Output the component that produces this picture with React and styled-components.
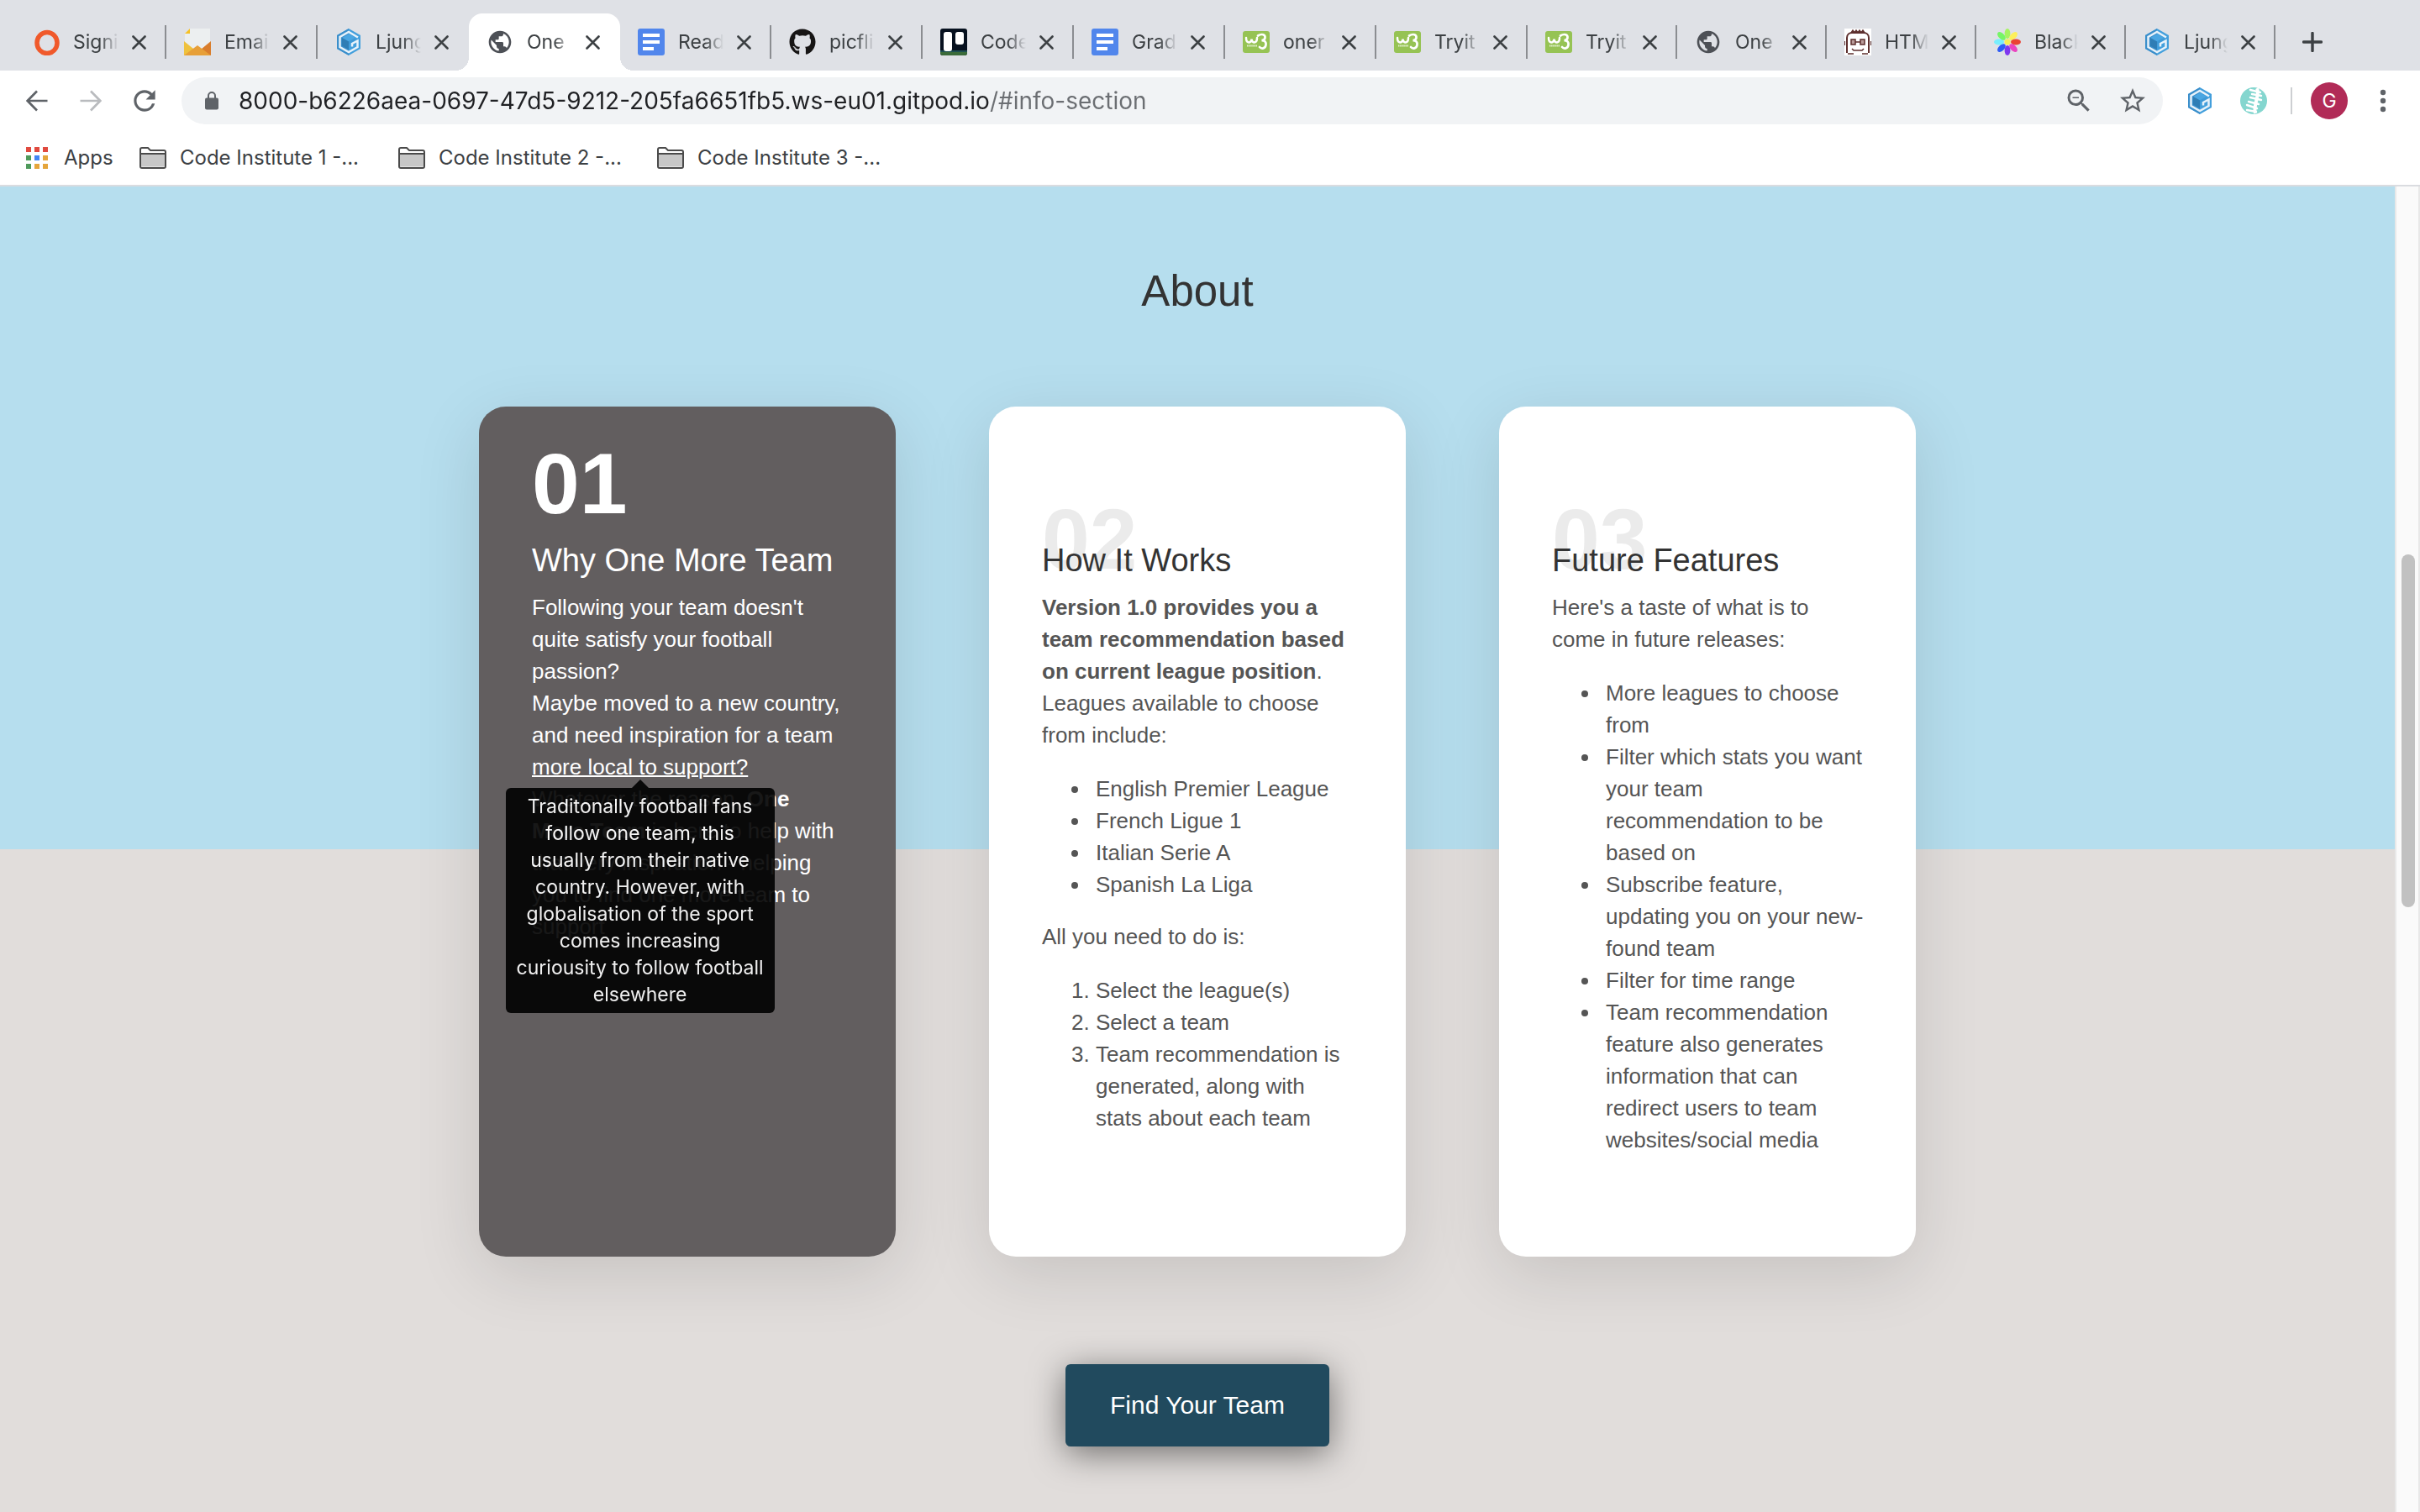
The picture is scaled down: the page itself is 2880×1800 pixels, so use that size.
import React from "react";
import styled, { createGlobalStyle, css } from "styled-components";
import { MdPublic, MdRefresh, MdStarOutline, MdZoomOut } from "react-icons/md";
import { FaGithub } from "react-icons/fa";

const uiFont = `Inter, Roboto, sans-serif`;
const pageFont = `"Liberation Sans", Arial, sans-serif`;

const GlobalStyle = createGlobalStyle`
  *, *::before, *::after { box-sizing: border-box; }
  body { margin: 0; background: #fff; }
  button { border: 0; padding: 0; background: none; font: inherit; color: inherit; cursor: pointer; }
`;

const Window = styled.div`
  display: flex;
  flex-direction: column;
  min-height: 100vh;
`;

/* ---------- browser chrome ---------- */

const Chrome = styled.header`
  font-family: ${uiFont};
  color: #3c4043;
  background: #fff;
  border-bottom: 2px solid #dadce0;
`;

const TabStrip = styled.div`
  display: flex;
  align-items: flex-end;
  height: 84px;
  padding-left: 18px;
  background: #dfe1e6;
`;

const activeTab = css`
  background: #fff;
  border-radius: 16px 16px 0 0;

  &::before,
  &::after {
    content: "";
    position: absolute;
    bottom: 0;
    width: 16px;
    height: 16px;
  }
  &::before {
    right: 100%;
    background: radial-gradient(circle at 0 0, transparent 16px, #fff 16px);
  }
  &::after {
    left: 100%;
    background: radial-gradient(circle at 100% 0, transparent 16px, #fff 16px);
  }
`;

const Tab = styled.div`
  position: relative;
  display: flex;
  align-items: center;
  flex: 0 1 ${(p) => (p.$narrow ? 178 : 180)}px;
  min-width: 0;
  height: 68px;
  padding-left: 21px;
  ${(p) => p.$active && activeTab}
`;

const TabButton = styled.button`
  display: flex;
  flex: 1;
  align-items: center;
  gap: 16px;
  min-width: 0;
  height: 100%;

  svg {
    flex: none;
    width: 32px;
    height: 32px;
  }
`;

const TabLabel = styled.span`
  flex: 1;
  min-width: 0;
  overflow: hidden;
  white-space: nowrap;
  text-align: left;
  font-size: 23px;
  line-height: 32px;
  mask-image: linear-gradient(to right, #000 60%, transparent 100%);
`;

const CloseButton = styled.button`
  display: flex;
  flex: none;
  margin: 0 22px 0 16px;

  svg {
    width: 17px;
    height: 17px;
  }
`;

const TabDivider = styled.span`
  flex: none;
  width: 2px;
  height: 40px;
  background: ${(p) => (p.$hidden ? "transparent" : "#8b8d91")};
`;

const NewTabButton = styled.button`
  display: flex;
  align-items: center;
  justify-content: center;
  width: 88px;
  height: 68px;

  svg {
    width: 24px;
    height: 24px;
  }
`;

const Toolbar = styled.div`
  display: flex;
  align-items: center;
  height: 72px;
  padding: 0 12px;
`;

const IconButton = styled.button`
  display: flex;
  flex: none;
  align-items: center;
  justify-content: center;
  width: 64px;
  height: 56px;
  color: ${(p) => (p.$muted ? "#b9bbbe" : "#5f6368")};

  svg {
    width: ${(p) => p.$size || 32}px;
    height: ${(p) => p.$size || 32}px;
  }
`;

const AddressBar = styled.form`
  display: flex;
  flex: 1;
  align-items: center;
  height: 56px;
  margin: 0 12px;
  padding: 0 4px 0 28px;
  border-radius: 28px;
  background: #f1f3f5;

  > svg {
    flex: none;
    width: 16px;
    height: 22px;
    margin-right: 24px;
  }
`;

const AddressInput = styled.input`
  flex: 1;
  min-width: 0;
  height: 40px;
  padding: 0;
  border: 0;
  outline: 0;
  font-family: ${uiFont};
  font-size: 28px;
  color: transparent;
  caret-color: #202124;
  background: linear-gradient(to right, #202124 894px, #6b6e72 894px);
  background-clip: text;
`;

const ToolbarDivider = styled.span`
  flex: none;
  width: 2px;
  height: 32px;
  margin: 0 12px;
  background: #cdcfd2;
`;

const Avatar = styled.span`
  display: flex;
  align-items: center;
  justify-content: center;
  width: 44px;
  height: 44px;
  border-radius: 50%;
  background: #b12b57;
  color: #fff;
  font-size: 23px;
`;

const BookmarkBar = styled.nav`
  display: flex;
  align-items: center;
  height: 64px;
  padding-left: 31px;
`;

const Bookmark = styled.a`
  display: flex;
  align-items: center;
  gap: ${(p) => (p.$apps ? 19 : 16)}px;
  width: ${(p) => (p.$apps ? 135 : 308)}px;
  color: inherit;
  font-size: 24px;
  line-height: 32px;
  white-space: nowrap;
  text-decoration: none;
`;

/* ---------- web page ---------- */

const Viewport = styled.div`
  display: flex;
  flex: 1;
`;

const Page = styled.main`
  display: flex;
  flex: 1;
  flex-direction: column;
  align-items: center;
  padding: 94px 0 78px;
  font-family: ${pageFont};
  background: linear-gradient(to bottom, #b6deee 50%, #e1dddb 50%);
`;

const ScrollTrack = styled.div`
  display: grid;
  grid-template-rows: 438fr 420fr 720fr;
  width: 30px;
  padding: 0 4px 0 6px;
  border: solid #e8e8e8;
  border-width: 0 2px;
  background: #fafafa;
`;

const ScrollThumb = styled.div`
  grid-row: 2;
  width: 16px;
  border-radius: 8px;
  background: #c1c1c1;
`;

const PageTitle = styled.h2`
  margin: 0 0 106px;
  font-size: 51px;
  line-height: 62px;
  font-weight: 400;
  color: #333;
`;

const Cards = styled.section`
  display: grid;
  grid-template-columns: repeat(3, 1fr);
  gap: 111px;
  width: 60%;
`;

const Card = styled.article`
  padding: 42px 60px 96px 63px;
  border-radius: 32px;
  background: ${(p) => (p.$dark ? "#625e5f" : "#fff")};
  color: ${(p) => (p.$dark ? "#fff" : "#555")};
  box-shadow: 0 20px 80px rgba(0, 0, 0, 0.12);
  font-size: 26px;
  line-height: 38px;
`;

const CardHead = styled.div`
  display: grid;
  height: 166px;
  margin-bottom: 12px;
`;

const CardNumber = styled.span`
  grid-area: 1 / 1;
  align-self: ${(p) => (p.$raised ? "start" : "end")};
  font-size: 102px;
  line-height: 100px;
  font-weight: 700;
  color: ${(p) => (p.$raised ? "#fff" : "#ebebeb")};
`;

const CardTitle = styled.h3`
  grid-area: 1 / 1;
  align-self: end;
  margin: 0;
  font-size: 38px;
  line-height: 50px;
  font-weight: 400;
  white-space: nowrap;
  color: ${(p) => (p.$dark ? "#fff" : "#333")};
`;

const Paragraph = styled.p`
  margin: 0 0 26px;
`;

const BulletList = styled.ul`
  margin: 0 0 24px;
  padding-left: 58px;

  li {
    padding-left: 6px;
  }
`;

const StepList = styled.ol`
  margin: 0 0 24px;
  padding-left: 64px;
`;

const TooltipTarget = styled.span`
  position: relative;
  text-decoration: underline;
  text-decoration-thickness: 2px;
`;

const Tooltip = styled.span`
  position: absolute;
  top: calc(100% + 10px);
  left: 50%;
  width: 320px;
  padding: 6px 12px;
  transform: translateX(-50%);
  border-radius: 6px;
  background: #000;
  color: #fff;
  opacity: 0.9;
  font-family: ${uiFont};
  font-size: 23px;
  line-height: 32px;
  text-align: center;

  &::before {
    content: "";
    position: absolute;
    bottom: 100%;
    left: 50%;
    transform: translateX(-50%);
    border: 10px solid transparent;
    border-top: 0;
    border-bottom-color: #000;
  }
`;

const FindButton = styled.button`
  && {
    margin-top: 128px;
    padding: 24px 53px;
    border-radius: 6px;
    background: #214a5e;
    color: #fff;
    font-size: 30px;
    line-height: 50px;
    box-shadow: 0 8px 40px rgba(0, 0, 0, 0.5);
  }
`;

/* ---------- icons ---------- */

const RingIcon = () => (
  <svg viewBox="0 0 32 32">
    <ellipse cx="17" cy="17" rx="12" ry="12.5" fill="none" stroke="#f0592b" strokeWidth="5.5" />
  </svg>
);

const MailIcon = () => (
  <svg viewBox="0 0 32 32">
    <path d="M7 0h24v24H1V6z" fill="#eceff0" />
    <path d="M7 0v6H1z" fill="#f5c026" />
    <path d="M0 15l16 13L0 32z" fill="#efc13d" />
    <path d="M32 15L15 29l17 3z" fill="#d97d2c" />
    <path d="M0 32l16-12 16 12z" fill="#e79f38" />
  </svg>
);

const HexIcon = () => (
  <svg viewBox="0 0 32 32">
    <path d="M16 0l14 8v16l-14 8L2 24V8z" fill="#439fdc" />
    <path d="M16 0L2 8v16l14 8z" fill="#3b8fcb" />
    <path d="M27 10.500L16 4 5.500 10v12L16 28l10.500-6v-7.500L20 18v3.500" fill="none" stroke="#e8f2fa" strokeWidth="2.500" />
    <path d="M16 6.500L8 11l8 4.500 8-4.500z" fill="#4aa6e2" />
    <path d="M8 11v9.500l8 4.500v-9.500z" fill="#2f7db5" />
    <path d="M16 15.500l8-4.500v2.500l-8 5z" fill="#3f99d6" />
  </svg>
);

const GlobeIcon = () => <MdPublic color="#4d5056" />;

const DocIcon = () => (
  <svg viewBox="0 0 32 32">
    <rect width="32" height="32" rx="3" fill="#5186ec" />
    <path d="M6 8h20M6 16h20M6 24h13" stroke="#fff" strokeWidth="4" />
  </svg>
);

const GithubIcon = () => <FaGithub color="#171515" />;

const BoardIcon = () => (
  <svg viewBox="0 0 32 32">
    <rect width="32" height="32" rx="3" fill="#07111f" />
    <path d="M0 26h32v3a3 3 0 0 1-3 3H3a3 3 0 0 1-3-3z" fill="#3b6b3a" />
    <path d="M0 26h32v2H0z" fill="#1d4f52" />
    <rect x="4" y="4" width="10" height="23" rx="3" fill="#fff" />
    <rect x="18" y="4" width="10" height="15" rx="3" fill="#fff" />
  </svg>
);

const SchoolIcon = () => (
  <svg viewBox="0 0 32 32">
    <rect y="3" width="32" height="26" rx="3" fill="#96c354" />
    <path d="M4 11c0 7 6 7 6.500 1.500C11 18 17 18 17 11" fill="none" stroke="#fff" strokeWidth="2.500" strokeLinecap="round" />
    <path d="M18 8.500c5-3 9-1 8.500 2.500-.3 2-2 3-4 3.200 4 0 5.500 2.300 5 5.300-.6 4-5 5.500-7.500 2.500" fill="none" stroke="#fff" strokeWidth="2.700" strokeLinecap="round" />
    <path d="M5 20.500h12" stroke="#e4f0d2" strokeWidth="2" strokeDasharray="1.500 .6" />
  </svg>
);

const FaceIcon = () => (
  <svg viewBox="0 0 32 32" fill="none" stroke="#5d2f2e" strokeWidth="2">
    <rect width="32" height="32" fill="#fff" stroke="none" />
    <path d="M3 29V11c0-4 3-6 6-6h14c3 0 6 2 6 6v18" />
    <path d="M8 5l2-3 2 3 2-3 2 3 2-3 2 3 2-3 2 3" strokeWidth="1.500" />
    <path d="M0 15v5M32 15v5" />
    <rect x="8" y="13" width="5" height="6" fill="#b99c9a" strokeWidth="1.500" />
    <rect x="19" y="13" width="5" height="6" fill="#b99c9a" strokeWidth="1.500" />
    <path d="M13 16h6M9 24l2 2h10l2-2M4 30h7M21 30h7" strokeWidth="1.500" />
  </svg>
);

const petals = ["#a6f45f", "#fdf05a", "#ea4334", "#ea45c0", "#8037ef", "#2f5df5", "#78eefd", "#76f566"];
const FlowerIcon = () => (
  <svg viewBox="0 0 32 32">
    {petals.map((fill, i) => (
      <ellipse key={fill} cx="16" cy="6" rx="3.400" ry="6" fill={fill} transform={`rotate(${i * 45} 16 16)`} />
    ))}
    <circle cx="16" cy="16" r="3.500" fill="#f8ef52" />
  </svg>
);

const CloseIcon = () => (
  <svg viewBox="0 0 17 17">
    <path d="M1.500 1.500l14 14M15.500 1.500l-14 14" stroke="currentColor" strokeWidth="2.600" strokeLinecap="round" />
  </svg>
);

const PlusIcon = () => (
  <svg viewBox="0 0 24 24">
    <path d="M12 1.500v21M1.500 12h21" stroke="currentColor" strokeWidth="3.400" strokeLinecap="round" />
  </svg>
);

const ArrowIcon = ({ flip }) => (
  <svg viewBox="0 0 26 26">
    <path
      d="M25.500 13H2M13 1.500L1.700 13 13 24.500"
      fill="none"
      stroke="currentColor"
      strokeWidth="2.700"
      transform={flip ? "rotate(180 13 13)" : undefined}
    />
  </svg>
);

const LockIcon = () => (
  <svg viewBox="0 0 16 22">
    <rect y="7.500" width="16" height="14" rx="2" fill="#5f6368" />
    <path d="M4 9V5a4 4 0 0 1 8 0v4" fill="none" stroke="#5f6368" strokeWidth="2" />
  </svg>
);

const SpineIcon = () => (
  <svg viewBox="0 0 32 32">
    <circle cx="16" cy="16" r="16" fill="#84d6cf" />
    <path d="M20 1c4 8-5 20-2 30" fill="none" stroke="#fff" strokeWidth="4" />
    <path d="M12 3l12 3M14 8l11 2M12 12l13 3M10 17l12 3M8 21l12 4M8 27l11 2" stroke="#fff" strokeWidth="2.400" strokeLinecap="round" />
  </svg>
);

const DotsIcon = () => (
  <svg viewBox="0 0 28 28" fill="currentColor">
    <circle cx="14" cy="4" r="3.200" />
    <circle cx="14" cy="14" r="3.200" />
    <circle cx="14" cy="24" r="3.200" />
  </svg>
);

const appColors = ["#e04a3f", "#e04a3f", "#e04a3f", "#4f9a5b", "#4285f4", "#e5a53b", "#4f9a5b", "#e5a53b", "#e5a53b"];
const AppsIcon = () => (
  <svg width="26" height="26" viewBox="0 0 26 26">
    {appColors.map((fill, i) => (
      <rect key={i} x={(i % 3) * 10} y={Math.floor(i / 3) * 10} width="6" height="6" fill={fill} />
    ))}
  </svg>
);

const FolderIcon = () => (
  <svg width="32" height="26" viewBox="0 0 32 26">
    <path d="M1 3a2 2 0 0 1 2-2h7l3 3h16a2 2 0 0 1 2 2v17a2 2 0 0 1-2 2H3a2 2 0 0 1-2-2z" fill="#fff" stroke="#4a4a4a" strokeWidth="2" />
    <path d="M2 8h28v15.500H2z" fill="#c7c7c7" />
    <path d="M1 8h30" stroke="#4a4a4a" strokeWidth="2" />
  </svg>
);

/* ---------- data ---------- */

const tabs = [
  { label: "Signi", Icon: RingIcon },
  { label: "Emai", Icon: MailIcon },
  { label: "Ljung", Icon: HexIcon },
  { label: "One", Icon: GlobeIcon, active: true },
  { label: "Read", Icon: DocIcon },
  { label: "picfli", Icon: GithubIcon },
  { label: "Code", Icon: BoardIcon },
  { label: "Grad", Icon: DocIcon },
  { label: "oner", Icon: SchoolIcon },
  { label: "Tryit", Icon: SchoolIcon },
  { label: "Tryit", Icon: SchoolIcon, narrow: true },
  { label: "One", Icon: GlobeIcon, narrow: true },
  { label: "HTM", Icon: FaceIcon, narrow: true },
  { label: "Black", Icon: FlowerIcon, narrow: true },
  { label: "Ljung", Icon: HexIcon, narrow: true },
];

const folders = ["Code Institute 1 -...", "Code Institute 2 -...", "Code Institute 3 -..."];

const leagues = ["English Premier League", "French Ligue 1", "Italian Serie A", "Spanish La Liga"];

const steps = [
  "Select the league(s)",
  "Select a team",
  "Team recommendation is generated, along with stats about each team",
];

const features = [
  "More leagues to choose from",
  "Filter which stats you want your team recommendation to be based on",
  "Subscribe feature, updating you on your new-found team",
  "Filter for time range",
  "Team recommendation feature also generates information that can redirect users to team websites/social media",
];

/* ---------- composition ---------- */

function BrowserTabs() {
  return (
    <TabStrip>
      {tabs.map(({ label, Icon, active, narrow }, i) => (
        <Tab key={i} $active={active} $narrow={narrow}>
          <TabButton>
            <Icon />
            <TabLabel>{label}</TabLabel>
          </TabButton>
          <CloseButton aria-label="Close tab">
            <CloseIcon />
          </CloseButton>
          <TabDivider $hidden={active || (tabs[i + 1] && tabs[i + 1].active)} />
        </Tab>
      ))}
      <NewTabButton aria-label="New tab">
        <PlusIcon />
      </NewTabButton>
    </TabStrip>
  );
}

function BrowserToolbar() {
  return (
    <Toolbar>
      <IconButton $size={26} aria-label="Back">
        <ArrowIcon />
      </IconButton>
      <IconButton $size={26} $muted aria-label="Forward">
        <ArrowIcon flip />
      </IconButton>
      <IconButton $size={38} aria-label="Reload">
        <MdRefresh />
      </IconButton>
      <AddressBar onSubmit={(e) => e.preventDefault()}>
        <LockIcon />
        <AddressInput
          type="text"
          aria-label="Address"
          defaultValue="8000-b6226aea-0697-47d5-9212-205fa6651fb5.ws-eu01.gitpod.io/#info-section"
        />
        <IconButton type="button" $size={36} aria-label="Zoom">
          <MdZoomOut />
        </IconButton>
        <IconButton type="button" $size={36} aria-label="Bookmark this page">
          <MdStarOutline />
        </IconButton>
      </AddressBar>
      <IconButton aria-label="Gitpod extension">
        <HexIcon />
      </IconButton>
      <IconButton aria-label="Extension">
        <SpineIcon />
      </IconButton>
      <ToolbarDivider />
      <IconButton aria-label="Profile">
        <Avatar>G</Avatar>
      </IconButton>
      <IconButton $size={28} aria-label="Menu">
        <DotsIcon />
      </IconButton>
    </Toolbar>
  );
}

function InfoCard({ number, title, dark, children }) {
  return (
    <Card $dark={dark}>
      <CardHead>
        <CardNumber $raised={dark}>{number}</CardNumber>
        <CardTitle $dark={dark}>{title}</CardTitle>
      </CardHead>
      {children}
    </Card>
  );
}

export default function App() {
  return (
    <Window>
      <GlobalStyle />
      <Chrome>
        <BrowserTabs />
        <BrowserToolbar />
        <BookmarkBar>
          <Bookmark href="#apps" $apps>
            <AppsIcon />
            Apps
          </Bookmark>
          {folders.map((name) => (
            <Bookmark key={name} href="#folder">
              <FolderIcon />
              {name}
            </Bookmark>
          ))}
        </BookmarkBar>
      </Chrome>

      <Viewport>
        <Page>
          <PageTitle>About</PageTitle>
          <Cards>
            <InfoCard number="01" title="Why One More Team" dark>
              <Paragraph>
                Following your team doesn't quite satisfy your football passion?
                <br />
                Maybe moved to a new country, and need inspiration for a team{" "}
                <TooltipTarget tabIndex={0} aria-describedby="local-tip">
                  more local to support?
                  <Tooltip id="local-tip" role="tooltip">
                    Traditonally football fans follow one team, this usually from their native
                    country. However, with globalisation of the sport comes increasing curiousity
                    to follow football elsewhere
                  </Tooltip>
                </TooltipTarget>
                <br />
                Whatever the reason, <strong>One More Team</strong> is here to help with that very
                inspiration - helping you to find one more team to support
              </Paragraph>
            </InfoCard>

            <InfoCard number="02" title="How It Works">
              <Paragraph>
                <strong>
                  Version 1.0 provides you a team recommendation based on current league position
                </strong>
                . Leagues available to choose from include:
              </Paragraph>
              <BulletList>
                {leagues.map((text) => (
                  <li key={text}>{text}</li>
                ))}
              </BulletList>
              <Paragraph>All you need to do is:</Paragraph>
              <StepList>
                {steps.map((text) => (
                  <li key={text}>{text}</li>
                ))}
              </StepList>
            </InfoCard>

            <InfoCard number="03" title="Future Features">
              <Paragraph>Here's a taste of what is to come in future releases:</Paragraph>
              <BulletList>
                {features.map((text) => (
                  <li key={text}>{text}</li>
                ))}
              </BulletList>
            </InfoCard>
          </Cards>
          <FindButton>Find Your Team</FindButton>
        </Page>
        <ScrollTrack>
          <ScrollThumb />
        </ScrollTrack>
      </Viewport>
    </Window>
  );
}
